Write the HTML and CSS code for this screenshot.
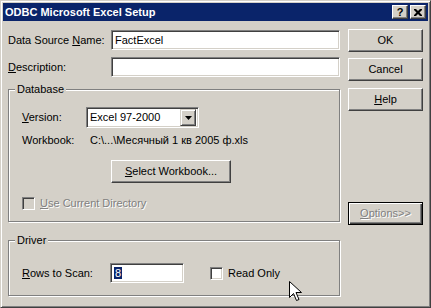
FILE: index.html
```html
<!DOCTYPE html>
<html lang="en">
<head>
    <meta charset="UTF-8">
    <title>ODBC Microsoft Excel Setup</title>
    <link rel="stylesheet" href="styles.css">
</head>
<body>
    <div class="window">
        <div class="titlebar">
            <span class="title-text">ODBC Microsoft Excel Setup</span>
            <div class="title-buttons">
                <span class="title-btn help-btn">?</span>
                <span class="title-btn">
                    <svg width="8" height="7" viewBox="0 0 8 7">
                        <path d="M0 0h2l2 2 2-2h2v1l-2.5 2.5L8 6v1H6L4 5 2 7H0V6l2.5-2.5L0 1z" fill="#000"/>
                    </svg>
                </span>
            </div>
        </div>

        <div class="dialog-body">
            <div class="main-col">
                <div class="field-row">
                    <label class="field-label">Data Source <u>N</u>ame:</label>
                    <div class="text-box">FactExcel</div>
                </div>
                <div class="field-row">
                    <label class="field-label"><u>D</u>escription:</label>
                    <div class="text-box"></div>
                </div>

                <div class="group group-database">
                    <span class="group-title">Database</span>
                    <div class="version-row">
                        <label class="version-label"><u>V</u>ersion:</label>
                        <div class="combo">
                            <span class="combo-text">Excel 97-2000</span>
                            <span class="combo-btn">
                                <svg width="7" height="4" viewBox="0 0 7 4"><path d="M0 0h7L3.5 4z" fill="#000"/></svg>
                            </span>
                        </div>
                    </div>
                    <div class="workbook-row">
                        <span class="workbook-label">Workbook:</span>
                        <span>C:\...\Месячный 1 кв 2005 ф.xls</span>
                    </div>
                    <button class="push-btn select-btn"><u>S</u>elect Workbook...</button>
                    <div class="check-row disabled">
                        <span class="check-box"></span>
                        <span class="check-text"><u>U</u>se Current Directory</span>
                    </div>
                </div>

                <div class="group group-driver">
                    <span class="group-title">Driver</span>
                    <div class="driver-row">
                        <label class="rows-label"><u>R</u>ows to Scan:</label>
                        <div class="text-box rows-box"><span class="selected">8</span></div>
                        <div class="check-row read-only">
                            <span class="check-box"></span>
                            <span class="check-text">Read Only</span>
                        </div>
                    </div>
                </div>
            </div>

            <div class="button-col">
                <button class="push-btn">OK</button>
                <button class="push-btn">Cancel</button>
                <button class="push-btn help"><u>H</u>elp</button>
                <button class="push-btn options-btn"><u>O</u>ptions&gt;&gt;</button>
            </div>
        </div>

        <svg class="cursor" width="13" height="21" viewBox="0 0 13 21">
            <path d="M0.5 0.5v16l4-4 3 7 2.5-1-3-7h5.5z" fill="#fff" stroke="#000" stroke-width="1"/>
        </svg>
    </div>
</body>
</html>
```

FILE: styles.css
```css
:root {
    --face: #D4D0C8;
    --shadow: #808080;
    --dark: #404040;
    --navy: #0A246A;
}

* {
    margin: 0;
    padding: 0;
    box-sizing: border-box;
}

body {
    font-family: 'Liberation Sans', Arial, sans-serif;
    font-size: 11px;
    line-height: 13px;
    color: #000;
    background: var(--face);
}

u {
    text-decoration: underline;
    text-underline-offset: 1px;
}

.window {
    position: relative;
    width: 431px;
    height: 308px;
    background: var(--face);
    border: 1px solid;
    border-color: var(--face) var(--dark) var(--dark) var(--face);
    box-shadow: inset 1px 1px #fff, inset -1px -1px var(--shadow);
    padding: 2px;
}

.titlebar {
    height: 18px;
    background: var(--navy);
    color: #fff;
    display: flex;
    align-items: center;
    justify-content: space-between;
    padding: 0 2px 0 2px;
}

.title-text {
    font-weight: bold;
    font-size: 11px;
}

.title-buttons {
    display: flex;
    gap: 2px;
}

.title-btn {
    width: 16px;
    height: 14px;
    background: var(--face);
    border: 1px solid;
    border-color: #fff var(--dark) var(--dark) #fff;
    box-shadow: inset -1px -1px var(--shadow);
    display: flex;
    align-items: center;
    justify-content: center;
    color: #000;
    font-weight: bold;
    font-size: 11px;
    line-height: 12px;
}

.dialog-body {
    display: flex;
    gap: 7px;
    padding: 9px 4px 0 5px;
}

.main-col {
    width: 333px;
}

.field-row {
    display: flex;
    align-items: center;
    height: 20px;
    margin-bottom: 7px;
}

.field-label {
    width: 103px;
}

.text-box {
    width: 229px;
    height: 20px;
    background: #fff;
    border: 1px solid;
    border-color: var(--shadow) #fff #fff var(--shadow);
    box-shadow: inset 1px 1px var(--dark), inset -1px -1px var(--face);
    padding: 3px 0 0 3px;
}

.group {
    position: relative;
    width: 332px;
    border: 1px solid var(--shadow);
    box-shadow: inset 1px 1px #fff, 1px 1px #fff;
    padding-left: 13px;
}

.group-title {
    position: absolute;
    top: -7px;
    left: 6px;
    padding: 0 2px;
    background: var(--face);
}

.group-database {
    margin-top: 12px;
    height: 133px;
    padding-top: 17px;
}

.version-row {
    display: flex;
    align-items: center;
    height: 21px;
}

.version-label {
    width: 64px;
}

.combo {
    width: 113px;
    height: 21px;
    background: #fff;
    border: 1px solid;
    border-color: var(--shadow) #fff #fff var(--shadow);
    box-shadow: inset 1px 1px var(--dark), inset -1px -1px var(--face);
    display: flex;
    align-items: center;
    justify-content: space-between;
    padding: 2px 2px 2px 3px;
}

.combo-btn {
    width: 16px;
    height: 17px;
    background: var(--face);
    border: 1px solid;
    border-color: var(--face) var(--dark) var(--dark) var(--face);
    box-shadow: inset 1px 1px #fff, inset -1px -1px var(--shadow);
    display: flex;
    align-items: center;
    justify-content: center;
}

.workbook-row {
    display: flex;
    margin-top: 6px;
}

.workbook-label {
    width: 68px;
}

.push-btn {
    display: block;
    font: inherit;
    color: #000;
    width: 75px;
    height: 23px;
    background: var(--face);
    border: 1px solid;
    border-color: #fff var(--dark) var(--dark) #fff;
    box-shadow: inset -1px -1px var(--shadow);
    text-align: center;
}

.select-btn {
    width: 120px;
    margin: 13px 0 0 89px;
}

.check-row {
    display: flex;
    align-items: center;
    gap: 5px;
}

.check-box {
    width: 13px;
    height: 13px;
    background: #fff;
    border: 1px solid;
    border-color: var(--shadow) #fff #fff var(--shadow);
    box-shadow: inset 1px 1px var(--dark), inset -1px -1px var(--face);
}

.disabled {
    margin-top: 14px;
}

.disabled .check-box {
    background: var(--face);
}

.disabled .check-text {
    color: var(--shadow);
    text-shadow: 1px 1px #fff;
}

.group-driver {
    margin-top: 18px;
    height: 56px;
    padding-top: 22px;
}

.driver-row {
    display: flex;
    align-items: center;
    height: 20px;
}

.rows-label {
    width: 88px;
}

.rows-box {
    width: 74px;
    padding-top: 3px;
}

.selected {
    background: var(--navy);
    color: #fff;
    padding: 0 1px;
}

.read-only {
    margin-left: 26px;
}

.button-col {
    display: flex;
    flex-direction: column;
    gap: 6px;
    margin-top: -1px;
}

.help {
    margin-top: 1px;
}

.options-btn {
    margin-top: 85px;
    border: 1px solid #000;
    box-shadow: inset 1px 1px #fff, inset -1px -1px var(--dark), inset -2px -2px var(--shadow);
    color: var(--shadow);
    text-shadow: 1px 1px #fff;
}

.cursor {
    position: absolute;
    left: 288px;
    top: 280px;
}
```
